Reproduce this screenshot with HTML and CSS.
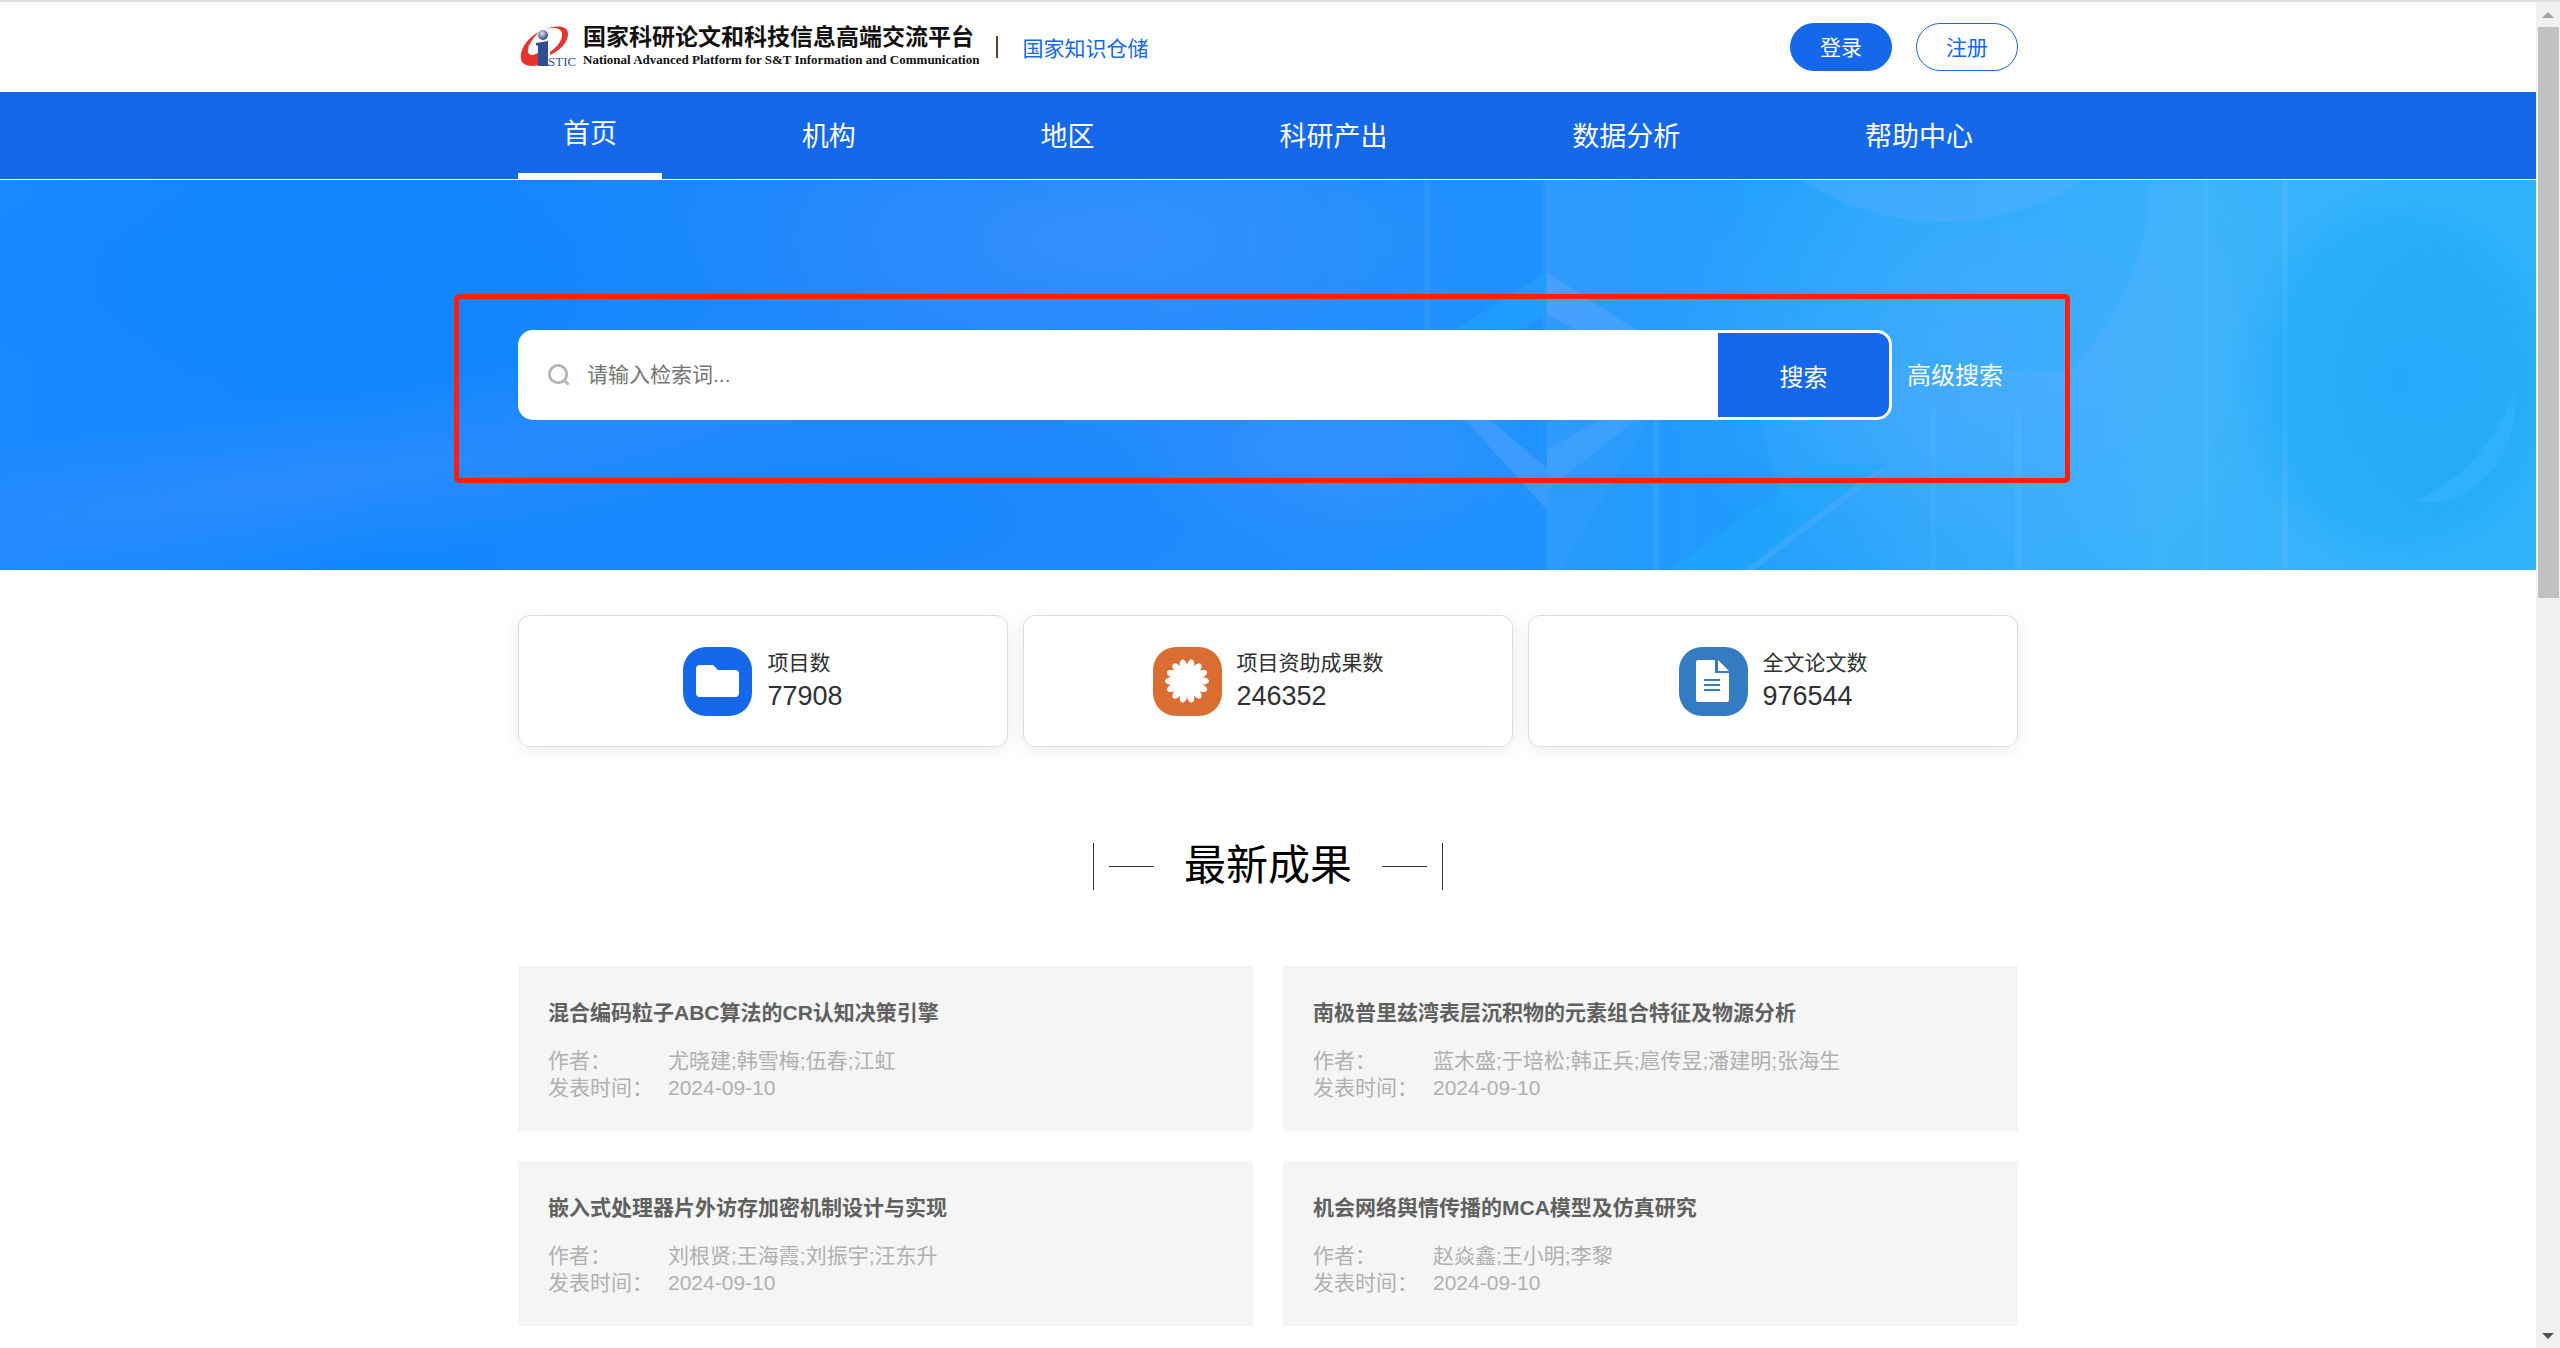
FILE: index.html
```html
<!DOCTYPE html>
<html lang="zh-CN">
<head>
    <meta charset="UTF-8">
    <meta name="viewport" content="width=device-width, initial-scale=1.0">
    <title>国家知识仓储</title>
    <link rel="stylesheet" href="styles.css">
</head>
<body>

    <div class="page">
        <header class="header">
            <div class="container header-inner">
                <a class="brand" href="#">
                    <svg class="brand-logo" viewBox="0 0 58 44" aria-label="ISTIC">
                        <defs>
                            <radialGradient id="ball" cx="0.4" cy="0.35" r="0.7">
                                <stop offset="0" stop-color="#e4e6f3"/>
                                <stop offset="0.5" stop-color="#8088bb"/>
                                <stop offset="1" stop-color="#2c3a80"/>
                            </radialGradient>
                        </defs>
                        <path d="M26 4C36 0 48 0 48 9C48 18 39 26 30 30V27C37 22 43 15 42 8C41 3 34 2 26 4Z" fill="#e6332c"/>
                        <path d="M19 7C8 12 -1 25 1 34C2 41 11 42 19 40V27C14 31 9 31 8 27C7 21 13 13 19 7Z" fill="#e6332c"/>
                        <circle cx="23" cy="10" r="5" fill="url(#ball)"/>
                        <path d="M16 18L28 16V39L29 41H18V21L16 20Z" fill="#2f4f93"/>
                        <text class="brand-mark" x="28" y="41">STIC</text>
                    </svg>
                    <span class="brand-text">
                        <span class="brand-cn">国家科研论文和科技信息高端交流平台</span>
                        <span class="brand-en">National Advanced Platform for S&amp;T Information and Communication</span>
                    </span>
                </a>
                <span class="divider"></span>
                <a class="site-name" href="#">国家知识仓储</a>
                <div class="account">
                    <button class="btn btn-primary" type="button">登录</button>
                    <button class="btn" type="button">注册</button>
                </div>
            </div>
        </header>

        <nav class="nav">
            <div class="container nav-inner">
                <a class="active" href="#">首页</a>
                <a href="#">机构</a>
                <a href="#">地区</a>
                <a href="#">科研产出</a>
                <a href="#">数据分析</a>
                <a href="#">帮助中心</a>
            </div>
        </nav>

        <section class="hero">
            <svg class="hero-bg" viewBox="0 0 2536 390" preserveAspectRatio="xMidYMid slice" aria-hidden="true">
                <defs>
                    <linearGradient id="base" x1="0" y1="0" x2="1" y2="0">
                        <stop offset="0" stop-color="#1a88fe"/>
                        <stop offset="0.15" stop-color="#1286fd"/>
                        <stop offset="0.4" stop-color="#2389fb"/>
                        <stop offset="0.6" stop-color="#1f92fd"/>
                        <stop offset="0.72" stop-color="#27a3fc"/>
                        <stop offset="0.85" stop-color="#3cb3fb"/>
                        <stop offset="1" stop-color="#30b3fb"/>
                    </linearGradient>
                    <radialGradient id="glow">
                        <stop offset="0" stop-color="#5aaeff" stop-opacity="0.6"/>
                        <stop offset="1" stop-color="#5aaeff" stop-opacity="0"/>
                    </radialGradient>
                    <radialGradient id="haze">
                        <stop offset="0" stop-color="#4a95ff" stop-opacity="0.4"/>
                        <stop offset="1" stop-color="#4a95ff" stop-opacity="0"/>
                    </radialGradient>
                    <radialGradient id="shade">
                        <stop offset="0" stop-color="#0a84ff" stop-opacity="0.45"/>
                        <stop offset="1" stop-color="#0a84ff" stop-opacity="0"/>
                    </radialGradient>
                    <radialGradient id="disc">
                        <stop offset="0" stop-color="#12a4f8" stop-opacity="0.5"/>
                        <stop offset="0.7" stop-color="#12a4f8" stop-opacity="0.4"/>
                        <stop offset="1" stop-color="#12a4f8" stop-opacity="0"/>
                    </radialGradient>
                    <linearGradient id="edge" x1="0" y1="0" x2="1" y2="0">
                        <stop offset="0" stop-color="#fff" stop-opacity="0.07"/>
                        <stop offset="1" stop-color="#fff" stop-opacity="0"/>
                    </linearGradient>
                </defs>
                <rect width="2536" height="390" fill="url(#base)"/>
                <ellipse cx="330" cy="300" rx="700" ry="90" fill="url(#haze)" transform="rotate(-8 330 300)"/>
                <ellipse cx="320" cy="100" rx="420" ry="120" fill="url(#shade)"/>
                <ellipse cx="900" cy="340" rx="420" ry="130" fill="url(#shade)"/>
                <ellipse cx="1100" cy="60" rx="420" ry="150" fill="url(#haze)"/>
                <ellipse cx="1340" cy="270" rx="220" ry="110" fill="url(#haze)"/>
                <ellipse cx="1980" cy="160" rx="330" ry="260" fill="url(#glow)"/>
                <!-- vertical light strips -->
                <rect x="1547" y="0" width="190" height="390" fill="url(#edge)"/>
                <rect x="1424" y="0" width="6" height="150" fill="#fff" opacity="0.05"/>
                <rect x="1543" y="0" width="5" height="150" fill="#fff" opacity="0.05"/>
                <rect x="1653" y="230" width="6" height="160" fill="#fff" opacity="0.08"/>
                <rect x="1930" y="230" width="6" height="160" fill="#fff" opacity="0.04"/>
                <rect x="2015" y="230" width="6" height="160" fill="#fff" opacity="0.05"/>
                <rect x="2203" y="0" width="6" height="390" fill="#fff" opacity="0.04"/>
                <rect x="2282" y="0" width="6" height="390" fill="#fff" opacity="0.07"/>
                <!-- hexagon frame -->
                <path d="M1547 92V134L1520 150H1454Z" fill="#1fa5ff" opacity="0.5"/>
                <path d="M1547 92L1636 150H1576L1547 134Z" fill="#6aabff" opacity="0.4"/>
                <path d="M1465 240H1490L1547 288V330Z" fill="#6aabff" opacity="0.35"/>
                <path d="M1547 270L1600 240H1636L1547 310Z" fill="#6aabff" opacity="0.25"/>
                <!-- circles on the right -->
                <path d="M1738 0H2150C2150 80 2110 150 2070 190H1860C1780 150 1745 80 1738 0Z" fill="#1aa8ff" opacity="0.2"/>
                <circle cx="1943" cy="-219" r="261" fill="#58b3ff" opacity="0.35"/>
                <path d="M1762 240C1770 300 1785 320 1800 340L1740 390H1560L1650 240Z" fill="#0f93ff" opacity="0.25"/>
                <ellipse cx="2400" cy="200" rx="170" ry="200" fill="url(#disc)"/>
                <path d="M2515 210C2522 270 2480 330 2412 322C2466 300 2495 260 2515 210Z" fill="#4fc0ff" opacity="0.25"/>
                <path d="M1670 390L1815 285H1885L1755 390Z" fill="#1ea8fc" opacity="0.6"/>
                <path d="M1745 390L1875 290H1885L1755 390Z" fill="#57aaff" opacity="0.45"/>
            </svg>
            <div class="container">
                <form class="search">
                    <div class="search-box">
                        <svg class="search-icon" viewBox="0 0 24 24" aria-hidden="true">
                            <circle cx="11" cy="11" r="9.5"/>
                            <path d="M18 18L22.5 22.5"/>
                        </svg>
                        <input type="text" aria-label="检索词" placeholder="请输入检索词...">
                        <button type="submit">搜索</button>
                    </div>
                    <a class="advanced" href="#">高级搜索</a>
                    <span class="highlight"></span>
                </form>
            </div>
        </section>

        <main class="container">
            <section class="stats">
                <div class="stat">
                    <span class="stat-icon blue">
                        <svg viewBox="0 0 44 44" aria-hidden="true">
                            <path d="M4 6H17L22 11H39Q43 11 43 15V34Q43 38 39 38H4Q0 38 0 34V10Q0 6 4 6Z"/>
                        </svg>
                    </span>
                    <div>
                        <p class="stat-label">项目数</p>
                        <p class="stat-value">77908</p>
                    </div>
                </div>
                <div class="stat">
                    <span class="stat-icon orange">
                        <svg viewBox="0 0 44 44" aria-hidden="true">
                            <path id="badge" d=""/>
                        </svg>
                    </span>
                    <div>
                        <p class="stat-label">项目资助成果数</p>
                        <p class="stat-value">246352</p>
                    </div>
                </div>
                <div class="stat">
                    <span class="stat-icon steel">
                        <svg viewBox="0 0 44 44" aria-hidden="true">
                            <path d="M7 1H24V14H38V41Q38 43 36 43H7Q5 43 5 41V3Q5 1 7 1Z"/>
                            <path d="M27 1L38 12H27Z"/>
                            <path class="lines" d="M13 21H29M13 26H29M13 31H29"/>
                        </svg>
                    </span>
                    <div>
                        <p class="stat-label">全文论文数</p>
                        <p class="stat-value">976544</p>
                    </div>
                </div>
            </section>

            <div class="section-title">
                <span class="bar"></span>
                <span class="dash"></span>
                <h2>最新成果</h2>
                <span class="dash"></span>
                <span class="bar"></span>
            </div>

            <section class="papers">
                <article class="paper">
                    <h3>混合编码粒子ABC算法的CR认知决策引擎</h3>
                    <dl>
                        <dt>作者：</dt><dd>尤晓建;韩雪梅;伍春;江虹</dd>
                        <dt>发表时间：</dt><dd>2024-09-10</dd>
                    </dl>
                </article>
                <article class="paper">
                    <h3>南极普里兹湾表层沉积物的元素组合特征及物源分析</h3>
                    <dl>
                        <dt>作者：</dt><dd>蓝木盛;于培松;韩正兵;扈传昱;潘建明;张海生</dd>
                        <dt>发表时间：</dt><dd>2024-09-10</dd>
                    </dl>
                </article>
                <article class="paper">
                    <h3>嵌入式处理器片外访存加密机制设计与实现</h3>
                    <dl>
                        <dt>作者：</dt><dd>刘根贤;王海霞;刘振宇;汪东升</dd>
                        <dt>发表时间：</dt><dd>2024-09-10</dd>
                    </dl>
                </article>
                <article class="paper">
                    <h3>机会网络舆情传播的MCA模型及仿真研究</h3>
                    <dl>
                        <dt>作者：</dt><dd>赵焱鑫;王小明;李黎</dd>
                        <dt>发表时间：</dt><dd>2024-09-10</dd>
                    </dl>
                </article>
            </section>
        </main>
    </div>

    <div class="scrollbar" aria-hidden="true">
        <svg class="arrow up" viewBox="0 0 12 6"><path d="M6 0L12 6H0Z"/></svg>
        <div class="track"><div class="thumb"></div></div>
        <svg class="arrow down" viewBox="0 0 12 6"><path d="M0 0H12L6 6Z"/></svg>
    </div>

    <script>
        // 14-petal badge outline
        const petals = 14;
        let d = '';
        for (let i = 0; i <= petals * 12; i++) {
            const a = (i / (petals * 12)) * Math.PI * 2;
            const r = 16 + 6 * Math.pow(Math.abs(Math.sin(a * petals / 2)), 0.7);
            d += (i ? 'L' : 'M') + (22 + r * Math.sin(a)).toFixed(2) + ' ' + (22 - r * Math.cos(a)).toFixed(2);
        }
        document.getElementById('badge').setAttribute('d', d + 'Z');
    </script>

</body>
</html>
```

FILE: styles.css
```css
* {
    margin: 0;
    padding: 0;
    box-sizing: border-box;
}

body {
    display: flex;
    min-height: 100vh;
    border-top: 2px solid #e1e1e1;
    font-family: "Liberation Sans", "Noto Sans CJK SC", sans-serif;
    font-size: 21px;
    color: #303133;
    background-color: #fff;
}

a {
    color: inherit;
    text-decoration: none;
}

button, input {
    font-family: inherit;
    font-size: 21px;
    border: none;
}

.page {
    flex: 1;
    min-width: 0;
}

.container {
    width: 100%;
    max-width: 1500px;
    margin: 0 auto;
}

/* Header */
.header-inner {
    display: flex;
    align-items: center;
    height: 90px;
}

.brand {
    display: flex;
    align-items: center;
    gap: 5px;
    color: #111;
}

.brand-logo {
    width: 58px;
    height: 44px;
    margin-left: 2px;
}

.brand-mark {
    font-family: "Liberation Serif", serif;
    font-size: 13px;
    fill: #2f4f93;
}

.brand-text {
    display: flex;
    flex-direction: column;
    white-space: nowrap;
}

.brand-cn {
    font-size: 23px;
    font-weight: 700;
    line-height: 26px;
}

.brand-en {
    font-family: "Liberation Serif", serif;
    font-size: 13px;
    font-weight: 700;
    line-height: 20px;
}

.divider {
    width: 2px;
    height: 22px;
    margin: 0 24px 0 17px;
    background-color: #5c4326;
}

.site-name {
    color: #1468e9;
}

.account {
    display: flex;
    gap: 24px;
    margin-left: auto;
}

.btn {
    width: 102px;
    height: 48px;
    padding-bottom: 3px;
    border: 1px solid #1468e9;
    border-radius: 24px;
    background-color: #fff;
    color: #1468e9;
    cursor: pointer;
}

.btn-primary {
    background-color: #1468e9;
    color: #fff;
}

/* Navigation */
.nav {
    background-color: #1468e9;
    border-bottom: 1px solid #fff;
}

.nav-inner {
    display: flex;
    justify-content: space-between;
    height: 87px;
}

.nav a {
    display: flex;
    align-items: center;
    padding: 0 45px 3px;
    color: #fff;
    font-size: 27px;
}

.nav a.active {
    border-bottom: 6px solid #fff;
}

/* Search banner */
.hero {
    position: relative;
    padding: 150px 0;
    background-color: #2589fb;
}

.hero-bg {
    position: absolute;
    top: 0;
    left: 0;
    width: 100%;
    height: 100%;
}

.search {
    position: relative;
    display: flex;
    align-items: center;
    gap: 15px;
}

.search-box {
    display: flex;
    align-items: center;
    flex: 1;
    max-width: 1374px;
    height: 90px;
    padding: 3px 3px 3px 30px;
    border-radius: 15px;
    background-color: #fff;
}

.search-icon {
    width: 22px;
    height: 22px;
    margin-right: 17px;
    fill: none;
    stroke: #b4b4b4;
    stroke-width: 3;
}

.search-box input {
    flex: 1;
    height: 100%;
    outline: none;
    background: none;
}

.search-box input::placeholder {
    color: #757575;
}

.search-box button {
    width: 171px;
    height: 100%;
    border-radius: 0 12px 12px 0;
    background-color: #1468e9;
    color: #fff;
    font-size: 24px;
    cursor: pointer;
}

.advanced {
    padding-bottom: 3px;
    color: #fff;
    font-size: 24px;
}

.highlight {
    position: absolute;
    top: -36px;
    right: -52px;
    bottom: -63px;
    left: -64px;
    border: 5px solid #ff1e10;
    border-radius: 5px;
    pointer-events: none;
}

/* Statistics */
.stats {
    display: grid;
    grid-template-columns: repeat(3, 1fr);
    gap: 15px;
    padding-top: 45px;
}

.stat {
    display: flex;
    align-items: center;
    justify-content: center;
    gap: 15px;
    height: 132px;
    border: 1px solid #dcdcdc;
    border-radius: 12px;
    box-shadow: 0 3px 18px rgba(0, 0, 0, 0.08);
}

.stat-icon {
    display: flex;
    align-items: center;
    justify-content: center;
    width: 69px;
    height: 69px;
    border-radius: 23px;
}

.stat-icon svg {
    width: 44px;
    height: 44px;
    fill: #fff;
}

.stat-icon .lines {
    stroke: #357bc3;
    stroke-width: 2;
}

.blue {
    background-color: #1468e9;
}

.orange {
    background-color: #da6d32;
}

.steel {
    background-color: #357bc3;
}

.stat-label {
    line-height: 30px;
}

.stat-value {
    font-size: 27px;
    line-height: 36px;
}

/* Section title */
.section-title {
    display: flex;
    align-items: center;
    justify-content: center;
    gap: 15px;
    padding: 89px 0 70px;
}

.section-title h2 {
    margin: 0 15px;
    font-size: 42px;
    font-weight: 400;
    line-height: 60px;
    color: #000;
}

.bar {
    width: 1px;
    height: 47px;
    background-color: #333;
}

.dash {
    width: 45px;
    height: 1px;
    background-color: #333;
}

/* Latest papers */
.papers {
    display: grid;
    grid-template-columns: 1fr 1fr;
    gap: 30px;
}

.paper {
    padding: 30px;
    background-color: #f5f5f5;
}

.paper h3 {
    margin-bottom: 18px;
    font-size: 21px;
    line-height: 33px;
    color: #606060;
}

.paper dl {
    display: grid;
    grid-template-columns: 120px 1fr;
    line-height: 27px;
    color: #b0b0b0;
}

/* Scrollbar column */
.scrollbar {
    display: flex;
    flex-direction: column;
    align-items: center;
    width: 24px;
    background-color: #f0f0f0;
}

.arrow {
    width: 12px;
    height: 6px;
    fill: #a3a3a3;
}

.up {
    margin: 10px 0 9px;
}

.down {
    margin: 9px 0;
    fill: #505050;
}

.track {
    flex: 1;
}

.thumb {
    width: 21px;
    height: 44%;
    background-color: #c1c1c1;
}
```
